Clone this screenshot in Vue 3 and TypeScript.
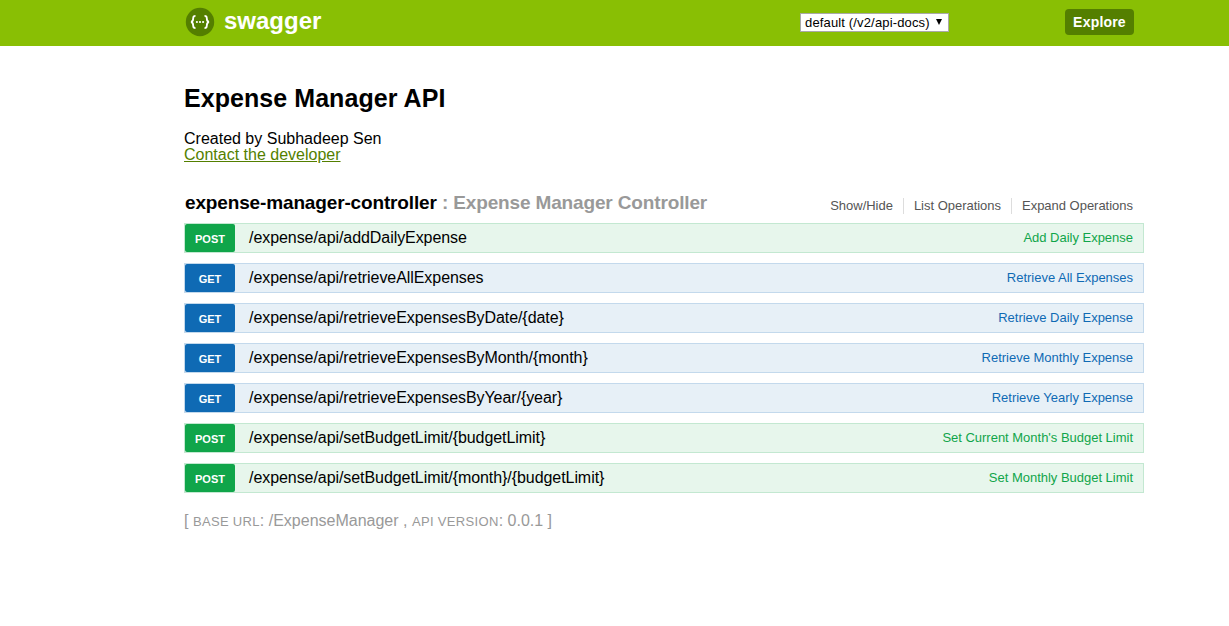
<script setup lang="ts">
interface Operation {
  method: 'post' | 'get'
  path: string
  summary: string
}

const operations: Operation[] = [
  { method: 'post', path: '/expense/api/addDailyExpense', summary: 'Add Daily Expense' },
  { method: 'get', path: '/expense/api/retrieveAllExpenses', summary: 'Retrieve All Expenses' },
  { method: 'get', path: '/expense/api/retrieveExpensesByDate/{date}', summary: 'Retrieve Daily Expense' },
  { method: 'get', path: '/expense/api/retrieveExpensesByMonth/{month}', summary: 'Retrieve Monthly Expense' },
  { method: 'get', path: '/expense/api/retrieveExpensesByYear/{year}', summary: 'Retrieve Yearly Expense' },
  { method: 'post', path: '/expense/api/setBudgetLimit/{budgetLimit}', summary: "Set Current Month's Budget Limit" },
  { method: 'post', path: '/expense/api/setBudgetLimit/{month}/{budgetLimit}', summary: 'Set Monthly Budget Limit' },
]

const actions: string[] = ['Show/Hide', 'List Operations', 'Expand Operations']
</script>

<template>
  <div class="page">
    <header class="header">
      <a class="logo">
        <svg class="logo-mark" width="30" height="30" viewBox="0 0 30 30" aria-hidden="true">
          <circle cx="15" cy="15" r="14.2" fill="#547f00" />
          <g fill="none" stroke="#fff" stroke-width="1.8">
            <path d="M10.5 8.9C8.6 8.9 8.2 9.5 8.2 11.2C8.2 13.6 8 14.7 6 15C8 15.3 8.2 16.4 8.2 18.8C8.2 20.5 8.6 21.1 10.5 21.1" />
            <path d="M19.5 8.9C21.4 8.9 21.8 9.5 21.8 11.2C21.8 13.6 22 14.7 24 15C22 15.3 21.8 16.4 21.8 18.8C21.8 20.5 21.4 21.1 19.5 21.1" />
          </g>
          <g fill="#fff">
            <circle cx="11.9" cy="15" r="1.1" />
            <circle cx="15" cy="15" r="1.1" />
            <circle cx="18.1" cy="15" r="1.1" />
          </g>
        </svg>
        <span class="logo-title">swagger</span>
      </a>
      <div class="select">
        <span class="select-value">default (/v2/api-docs)</span>
        <svg class="select-arrow" width="6" height="6" viewBox="0 0 6 6" aria-hidden="true">
          <path d="M0 0H6L3 6Z" fill="#000" />
        </svg>
      </div>
      <a class="explore">Explore</a>
    </header>

    <main class="content">
      <h1 class="title">Expense Manager API</h1>
      <div class="author">Created by Subhadeep Sen</div>
      <div class="contact"><a>Contact the developer</a></div>

      <div class="heading">
        <h2><span class="resource">expense-manager-controller</span><span class="description"> : Expense Manager Controller</span></h2>
        <ul class="actions">
          <li v-for="action in actions" :key="action">{{ action }}</li>
        </ul>
      </div>

      <ul class="operations">
        <li v-for="op in operations" :key="op.path" class="operation" :class="op.method">
          <span class="method">{{ op.method.toUpperCase() }}</span>
          <span class="path">{{ op.path }}</span>
          <span class="summary">{{ op.summary }}</span>
        </li>
      </ul>

      <footer class="footer">[ <span class="caps">base url</span>: /ExpenseManager , <span class="caps">api version</span>: 0.0.1 ]</footer>
    </main>
  </div>
</template>

<style>
body {
  background: #fff;
}
</style>

<style scoped>
.page {
  font-family: "Liberation Sans", Arial, sans-serif;
  font-size: 16px;
  line-height: 16px;
  color: #000;
  white-space: nowrap;
}
.header {
  display: flex;
  align-items: center;
  box-sizing: border-box;
  height: 46px;
  padding: 0 95px 2px 185px;
  background: #89bf04;
}
.logo {
  display: flex;
  align-items: center;
  margin-right: auto;
  color: #fff;
}
.logo-mark {
  display: block;
}
.logo-title {
  margin-left: 9px;
  font-size: 24px;
  line-height: 28px;
  font-weight: 700;
  padding-bottom: 2px;
}
.select {
  display: flex;
  align-items: center;
  justify-content: space-between;
  box-sizing: border-box;
  width: 149px;
  height: 19px;
  margin-right: 116px;
  padding: 0 6px 0 4px;
  border: 1px solid #a9a9a9;
  background: #fff;
  font-size: 13px;
  line-height: 17px;
}
.select-value {
  letter-spacing: 0.15px;
}
.explore {
  box-sizing: border-box;
  width: 69px;
  height: 26px;
  border-radius: 4px;
  background: #547f00;
  color: #fff;
  font-size: 14px;
  line-height: 26px;
  letter-spacing: 0.2px;
  font-weight: 700;
  text-align: center;
}
.content {
  width: 960px;
  margin-left: 184px;
}
.title {
  margin: 0;
  padding-top: 38px;
  font-size: 25px;
  line-height: 28px;
  letter-spacing: 0.06px;
}
.author {
  margin-top: 19px;
}
.contact {
  color: #547f00;
  text-decoration: underline;
}
.heading {
  display: flex;
  justify-content: space-between;
  height: 60px;
}
.heading h2 {
  margin: 29px 0 0 1px;
  font-size: 19px;
  line-height: 22px;
  letter-spacing: -0.145px;
}
.description {
  color: #999;
  white-space: pre;
}
.actions {
  display: flex;
  margin: 35px 11px 0 0;
  padding: 0;
  list-style: none;
  color: #555;
  font-size: 13px;
  line-height: 16px;
  letter-spacing: -0.02px;
}
.actions li {
  height: 16px;
}
.actions li + li {
  margin-left: 10px;
  padding-left: 10px;
  border-left: 1px solid #ddd;
}
.operations {
  display: grid;
  gap: 10px;
  margin: 0;
  padding: 0;
  list-style: none;
}
.operation {
  display: flex;
  box-sizing: border-box;
  height: 30px;
  border: 1px solid;
}
.method {
  width: 50px;
  height: 28px;
  border-radius: 2px;
  color: #fff;
  font-size: 11px;
  line-height: 30px;
  font-weight: 700;
  text-align: center;
}
.path {
  padding-left: 14px;
  line-height: 28px;
  letter-spacing: -0.065px;
}
.summary {
  margin-left: auto;
  padding-right: 10px;
  font-size: 13px;
  line-height: 27px;
  letter-spacing: -0.015px;
}
.post {
  border-color: #c3e8d1;
  background: #e7f6ec;
}
.post .method {
  background: #10a54a;
}
.post .summary {
  color: #10a54a;
}
.get {
  border-color: #c3d9ec;
  background: #e7f0f7;
}
.get .method {
  background: #0f6ab4;
}
.get .summary {
  color: #0f6ab4;
}
.footer {
  margin-top: 20px;
  color: #999;
}
.caps {
  font-size: 13px;
  letter-spacing: 0.33px;
  text-transform: uppercase;
}
</style>
